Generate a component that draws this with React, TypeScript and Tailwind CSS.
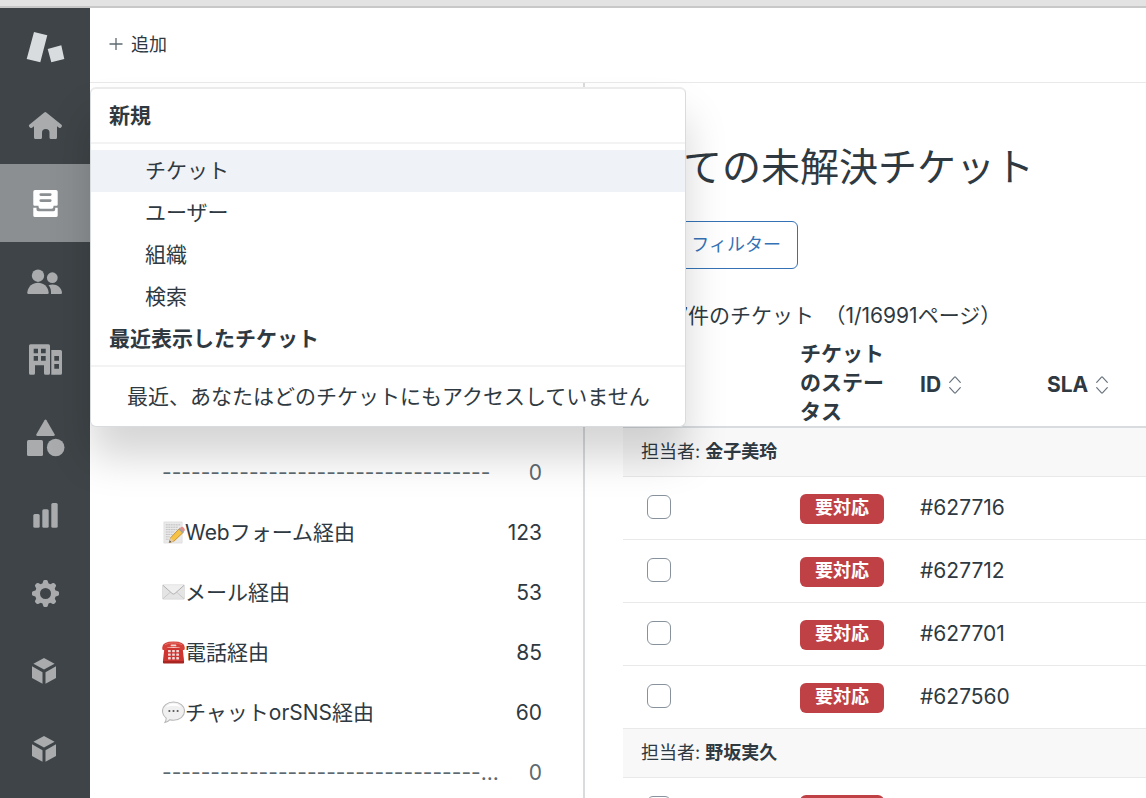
import type { ReactNode } from "react";

const navItems: { label: string; active?: boolean; icon: ReactNode }[] = [
  {
    label: "ホーム",
    icon: (
      <path d="M19.3 7.5Q20.3 6.700 21.300 7.500L36.500 19.800Q37.500 20.800 36.700 21.800L35.800 22.700Q35 23.300 34 22.700L32 21.300V32.500Q32 34 30.500 34H26Q24.500 34 24.500 32.500V27.800A3.750 3.750 0 0 0 17 27.800V32.500Q17 34 15.500 34H10.500Q9 34 9 32.500V21.300L7 22.700Q6 23.300 5.200 22.700L4.200 21.800Q3.400 20.800 4.300 19.800Z" />
    ),
  },
  {
    label: "ビュー",
    active: true,
    icon: (
      <path
        fillRule="evenodd"
        d="M10 7H31Q32.700 7 32.700 8.700V21.500Q32.700 22.700 31.500 22.700H28.500V23.500Q28.500 25.800 26.500 25.800H15.500Q13.500 25.800 13.500 23.500V22.700H9.500Q8.300 22.700 8.300 21.500V8.700Q8.300 7 10 7ZM15.800 10.200A1.400 1.400 0 0 0 15.800 13H25.200A1.400 1.400 0 0 0 25.200 10.200ZM15.800 16.200A1.400 1.400 0 0 0 15.800 19H25.200A1.400 1.400 0 0 0 25.200 16.200ZM8.300 24.700H11.500V26.500Q11.500 28.200 13.200 28.200H28.500Q30.200 28.200 30.200 26.500V24.700H32.700V32.500Q32.700 34 31 34H10Q8.300 34 8.300 32.500Z"
      />
    ),
  },
  {
    label: "顧客",
    icon: (
      <>
        <circle cx="13" cy="14.7" r="6.2" />
        <circle cx="27.3" cy="16.700" r="5.400" />
        <path d="M2.300 31.500C3 25.500 7.500 21.800 13 21.800S23 25.500 23.700 31.500Q23.700 33 22.700 33H3.300Q2.300 33 2.300 31.500Z" />
        <path d="M23.500 24.300C25 23.800 26 23.600 27.500 23.600C32.500 23.600 36.500 27 37 31.500Q37 33 36 33H26C26.300 29.500 25.500 26.500 23.500 24.300Z" />
      </>
    ),
  },
  {
    label: "組織",
    icon: (
      <path
        fillRule="evenodd"
        d="M5.500 5.300H23.500Q25 5.300 25 6.800V34.200Q25 35.700 23.500 35.700H20.500Q19 35.700 19 34.200V26.300H10V34.200Q10 35.700 8.500 35.700H5.500Q4 35.700 4 34.200V6.800Q4 5.300 5.500 5.300ZM8.700 9.700V14.300H13V9.700ZM16 9.700V14.300H20.700V9.700ZM8.700 17V21.700H13V17ZM16 17V21.700H20.700V17ZM26.300 11H35.500Q37 11 37 12.500V34.200Q37 35.700 35.500 35.700H26.300ZM29.300 17V21.700H34V17ZM29.300 25V29.700H34V25Z"
      />
    ),
  },
  {
    label: "オブジェクト",
    icon: (
      <>
        <path d="M19.500 3.300Q20.500 1.800 21.500 3.300L29.600 17.300Q30.300 19 28.600 19H12.400Q10.700 19 11.400 17.300Z" />
        <rect x="2" y="23" width="16" height="16" rx="1.500" />
        <circle cx="30.700" cy="30.500" r="8.800" />
      </>
    ),
  },
  {
    label: "レポート",
    icon: (
      <>
        <rect x="8.300" y="19" width="6.400" height="13.700" rx="1.500" />
        <rect x="17.300" y="14.300" width="6.400" height="18.400" rx="1.500" />
        <rect x="26.300" y="8" width="6.400" height="24.700" rx="1.500" />
      </>
    ),
  },
  {
    label: "設定",
    icon: (
      <g transform="translate(20.500 20.500)">
        <circle r="8" fill="none" stroke="currentColor" strokeWidth="5" />
        {[0, 45, 90, 135, 180, 225, 270, 315].map((angle) => (
          <path key={angle} transform={`rotate(${angle})`} d="M-3.200 -9.500L-2.200 -12.500Q-1.900 -13.500 -1 -13.500H1Q1.900 -13.500 2.200 -12.500L3.200 -9.500Z" />
        ))}
      </g>
    ),
  },
  { label: "アプリ 1", icon: <Cube /> },
  { label: "アプリ 2", icon: <Cube /> },
];

function Cube() {
  return <path d="M19 7L29.600 12.700L19 18.400L8.400 12.700ZM7 15.300L17.500 21.200V32.800L7 27.100ZM31 15.300L20.500 21.200V32.800L31 27.100Z" />;
}

function NavIcon({ children }: { children: ReactNode }) {
  return (
    <svg viewBox="0 0 40 40" className="h-10 w-10" fill="currentColor" aria-hidden="true">
      {children}
    </svg>
  );
}

const memoIcon = (
  <>
    <rect x="2" y="1" width="19" height="22" fill="#e9e9e9" stroke="#d6d6d6" strokeWidth="0.600" />
    <path d="M4 4H19M4 6.500H17M4 9H16M4 11.500H13M4 14H11M4 16.500H8M4 19H7" stroke="#b4b4b4" strokeWidth="0.800" strokeDasharray="2 0.600" />
    <path d="M7.500 22.500L9 17.500L18.500 7.500L22.500 11.500L12.500 21Z" fill="#f6c344" stroke="#b8801a" strokeWidth="0.800" />
    <path d="M18.500 7.500L20 6.200Q21.500 5.600 23 7.200Q24.300 8.800 23.600 10.200L22.500 11.500Z" fill="#e58c8c" />
    <path d="M17.300 8.700L18.500 7.500L22.500 11.500L21.300 12.700Z" fill="#9aa4ad" />
    <path d="M7.500 22.500L9 17.500L12.500 21Z" fill="#e9cfa3" />
    <path d="M7.500 22.500L8.200 20.300L9.700 21.800Z" fill="#444" />
  </>
);

const mailIcon = (
  <>
    <rect x="0.500" y="4" width="23" height="15" rx="0.800" fill="#e4e4e4" stroke="#d3d3d3" strokeWidth="0.600" />
    <path d="M1 18.500L9.500 11M23 18.500L14.500 11" stroke="#bdbdbd" strokeWidth="0.700" fill="none" />
    <path d="M1 4.500L10.500 13Q12 14.300 13.500 13L23 4.500" stroke="#a8a8a8" strokeWidth="0.900" fill="#efefef" />
  </>
);

const phoneIcon = (
  <>
    <path d="M2.500 7H21.500L23 20.500Q23 23 21.500 23H2.500Q1 23 1 20.500Z" fill="#cf3530" />
    <path d="M1 20.800H23V22.500Q23 23.500 22 23.500H2Q1 23.500 1 22.500Z" fill="#a82521" />
    <path d="M0.300 6.500Q0.500 0.500 12 0.500T23.700 6.500V8.300Q23.700 9.300 22.700 9.300H19.500Q18.500 9.300 18.500 8.300V6.800Q12 5.500 5.500 6.800V8.300Q5.500 9.300 4.500 9.300H1.300Q0.300 9.300 0.300 8.300Z" fill="#d5403a" />
    <path d="M3 4Q6 1.900 12 1.900T21 4" stroke="#e9807a" strokeWidth="0.800" fill="none" />
    <rect x="9" y="3.600" width="6" height="2" rx="1" fill="#f2d4d2" />
    <g fill="#f3dcdb">
      {[9.3, 13, 16.7].map((y) => (
        <g key={y}>
          <rect x="6.300" y={y} width="2.800" height="2.500" rx="0.400" />
          <rect x="10.600" y={y} width="2.800" height="2.500" rx="0.400" />
          <rect x="14.900" y={y} width="2.800" height="2.500" rx="0.400" />
        </g>
      ))}
    </g>
  </>
);

const chatIcon = (
  <>
    <path d="M12 1C18.500 1 23.500 5 23.500 10.500S18.500 20 12 20Q10 20 8.300 19.500Q6 22 3 22.500Q4.500 20.300 4.300 17.800C2 16 0.500 13.500 0.500 10.500C0.500 5 5.500 1 12 1Z" fill="#f0f0f0" stroke="#b8b8b8" strokeWidth="1.100" />
    <path d="M4 6.500Q7 2.500 12 2.500T20 6.500Q15.500 5 12 5T4 6.500Z" fill="#fff" />
    <g fill="#555">
      <circle cx="7.700" cy="10.500" r="1.100" />
      <circle cx="12" cy="10.500" r="1.100" />
      <circle cx="16.300" cy="10.500" r="1.100" />
    </g>
  </>
);

const views: { name: string; count: number; icon?: ReactNode }[] = [
  { name: "----------------------------------", count: 0 },
  { name: "Webフォーム経由", count: 123, icon: memoIcon },
  { name: "メール経由", count: 53, icon: mailIcon },
  { name: "電話経由", count: 85, icon: phoneIcon },
  { name: "チャットorSNS経由", count: 60, icon: chatIcon },
  { name: "---------------------------------...", count: 0 },
];

const groups = [
  { assignee: "金子美玲", tickets: ["#627716", "#627712", "#627701", "#627560"] },
  { assignee: "野坂実久", tickets: ["#627559"] },
];

function SortIcon() {
  return (
    <svg viewBox="0 0 12 18" className="h-[18px] w-3" fill="none" stroke="#68737d" strokeWidth="1.200" strokeLinecap="round" strokeLinejoin="round" aria-hidden="true">
      <path d="M0.700 6.300L5.500 1.200Q6 0.700 6.500 1.200L11.300 6.300M0.700 11.700L5.500 16.800Q6 17.300 6.500 16.800L11.300 11.700" />
    </svg>
  );
}

function Sidebar() {
  return (
    <nav className="flex w-[90px] shrink-0 flex-col bg-[#3e4447] text-[#a9abad]">
      <a href="#top" aria-label="トップ" className="flex h-[78px] shrink-0 items-center justify-center text-[#d8dcde]">
        <NavIcon>
          <path d="M9 5L22.300 8.300L15.300 35.300L1.700 32ZM22.700 22L36.300 18.300L39.300 32L26.300 35.300Z" />
        </NavIcon>
      </a>
      {navItems.map((item) => (
        <a
          key={item.label}
          href="#nav"
          aria-label={item.label}
          className={
            item.active
              ? "flex h-[78px] shrink-0 items-center justify-center bg-[#8b8f91] text-white"
              : "flex h-[78px] shrink-0 items-center justify-center"
          }
        >
          <NavIcon>{item.icon}</NavIcon>
        </a>
      ))}
    </nav>
  );
}

function AddMenu() {
  return (
    <div className="absolute top-[79px] left-0 z-10 w-[596px] rounded-md border border-t-2 border-[#d8dcde] border-t-[#ebebeb] bg-white text-[21px] leading-[42px] shadow-[0_30px_42px_rgba(0,0,0,0.17)]">
      <h2 className="border-b-2 border-[#f3f3f3] px-[18px] pt-1.5 pb-[5px] font-bold">新規</h2>
      <ul className="pt-1.5">
        {["チケット", "ユーザー", "組織", "検索"].map((label, index) => (
          <li key={label}>
            <button type="button" className={index === 0 ? "block w-full bg-[#eff2f7] px-[54px] text-left" : "block w-full px-[54px] text-left"}>
              {label}
            </button>
          </li>
        ))}
      </ul>
      <h2 className="border-b-2 border-[#f3f3f3] px-[18px] pb-[5px] font-bold">最近表示したチケット</h2>
      <p className="px-9 pt-[9px] pb-2 whitespace-nowrap">最近、あなたはどのチケットにもアクセスしていません</p>
    </div>
  );
}

function ViewList() {
  return (
    <aside className="w-[495px] shrink-0 border-r-2 border-[#d8dcde] pt-[360px] pr-[41px] pl-[72px]">
      <ul>
        {views.map((view, index) => (
          <li key={index} className={view.icon ? "flex h-[60px] items-center" : "flex h-[60px] items-center text-[#5c6970]"}>
            {view.icon && (
              <svg viewBox="0 0 24 24" className="mb-0.5 h-[23px] w-[23px] shrink-0" fill="none" aria-hidden="true">
                {view.icon}
              </svg>
            )}
            <span className="min-w-0 flex-1 truncate">{view.name}</span>
            <span className="w-10 shrink-0 text-right">{view.count}</span>
          </li>
        ))}
      </ul>
    </aside>
  );
}

function TicketTable() {
  return (
    <table className="mt-2 w-full table-fixed border-separate border-spacing-0 text-left">
      <colgroup>
        <col className="w-[177px]" />
        <col className="w-[120px]" />
        <col className="w-[127px]" />
        <col />
      </colgroup>
      <thead>
        <tr>
          <td className="border-b-2 border-[#d8dcde]" />
          <th scope="col" className="border-b-2 border-[#d8dcde] pr-8 leading-[29px] font-bold">チケットのステータス</th>
          <th scope="col" className="border-b-2 border-[#d8dcde] pt-1 font-bold">
            <button type="button" className="flex items-center gap-2">ID<SortIcon /></button>
          </th>
          <th scope="col" className="border-b-2 border-[#d8dcde] pt-1 font-bold">
            <button type="button" className="flex items-center gap-2">SLA<SortIcon /></button>
          </th>
        </tr>
      </thead>
      {groups.map((group) => (
        <tbody key={group.assignee}>
          <tr>
            <th colSpan={4} scope="colgroup" className="h-[49px] border-b border-[#e9e9e9] bg-[#f8f8f8] pl-[18px] text-lg font-normal">
              担当者: <b>{group.assignee}</b>
            </th>
          </tr>
          {group.tickets.map((id) => (
            <tr key={id}>
              <td className="h-[63px] border-b border-[#e9e9e9] pb-0.5 pl-6">
                <input type="checkbox" aria-label={id} className="block h-6 w-6 appearance-none rounded-md border border-[#87929d] bg-white" />
              </td>
              <td className="border-b border-[#e9e9e9] pt-0.5">
                <span className="block h-[30px] w-[84px] rounded-md bg-[#bf4146] text-center text-lg leading-7 font-bold text-white">要対応</span>
              </td>
              <td className="border-b border-[#e9e9e9]">{id}</td>
              <td className="border-b border-[#e9e9e9]" />
            </tr>
          ))}
        </tbody>
      ))}
    </table>
  );
}

export default function App() {
  return (
    <div lang="ja" className="flex h-screen flex-col overflow-hidden bg-white font-[Inter,'Noto_Sans_CJK_JP',sans-serif] text-[21px] text-[#2f3941]">
      <div className="h-2 shrink-0 border-b-2 border-[#c8c8c8] bg-[#e3e3e3]" />
      <div className="flex min-h-0 flex-1">
        <Sidebar />
        <div className="flex min-w-0 flex-1 flex-col">
          <header className="relative flex h-[75px] shrink-0 items-center border-b border-[#e9e9e9] pl-[19px]">
            <button type="button" className="flex items-center gap-2 text-lg">
              <svg viewBox="0 0 14 14" className="h-3.5 w-3.5" stroke="#5c6970" strokeWidth="1.300" aria-hidden="true">
                <path d="M7 0V12M0.500 6H13.500" />
              </svg>
              追加
            </button>
            <AddMenu />
          </header>
          <div className="flex min-h-0 flex-1">
            <ViewList />
            <main className="min-w-0 flex-1 pt-14 pl-[38px]">
              <h1 className="pl-[60px] text-[39px] leading-[56px] whitespace-nowrap">ての未解決チケット</h1>
              <button type="button" className="mt-[26px] block h-12 w-[175px] rounded-md border border-[#3572b5] pr-4 text-right text-lg text-[#3572b5]">
                フィルター
              </button>
              <p className="mt-8 pl-[53px] leading-[30px] whitespace-nowrap">7件のチケット　（1/16991ページ）</p>
              <TicketTable />
            </main>
          </div>
        </div>
      </div>
    </div>
  );
}
